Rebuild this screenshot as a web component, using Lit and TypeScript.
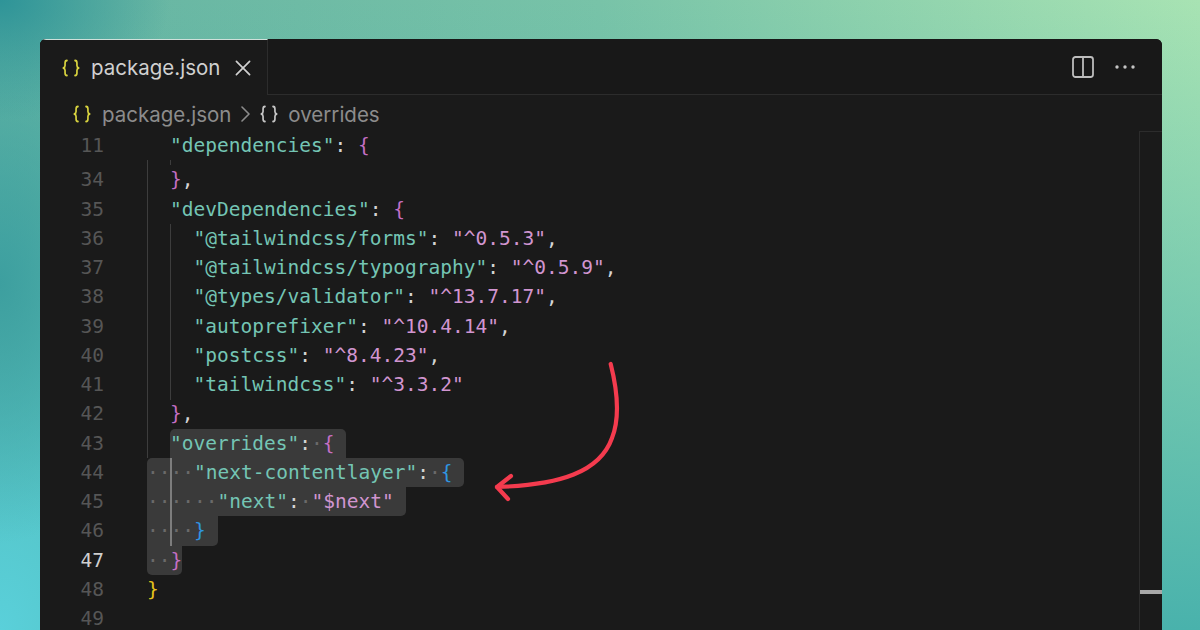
import { LitElement, html, css, nothing } from "lit";
import { customElement } from "lit/decorators.js";

type Seg = [string, string];
interface Row { n: number; segs: Seg[]; sel?: string; lead?: string; active?: boolean; }

const k = (t: string): Seg => ["key", t];
const v = (t: string): Seg => ["val", t];
const c = (t: string): Seg => ["pun", t];
const d = (t: string): Seg => ["dot", t];
const pink = (t: string): Seg => ["pink", t];
const blue = (t: string): Seg => ["blue", t];
const yel = (t: string): Seg => ["yel", t];

const entry = (n: number, key: string, val: string, comma = true): Row => ({
  n,
  lead: "    ",
  segs: [k(`"${key}"`), c(": "), v(`"${val}"`), ...(comma ? [c(",")] : [])],
});

const rows: Row[] = [
  { n: 34, lead: "  ", segs: [pink("}"), c(",")] },
  { n: 35, lead: "  ", segs: [k('"devDependencies"'), c(": "), pink("{")] },
  entry(36, "@tailwindcss/forms", "^0.5.3"),
  entry(37, "@tailwindcss/typography", "^0.5.9"),
  entry(38, "@types/validator", "^13.7.17"),
  entry(39, "autoprefixer", "^10.4.14"),
  entry(40, "postcss", "^8.4.23"),
  entry(41, "tailwindcss", "^3.3.2", false),
  { n: 42, lead: "  ", segs: [pink("}"), c(",")] },
  { n: 43, lead: "  ", sel: "s43", segs: [k('"overrides"'), c(":"), d("·"), pink("{")] },
  { n: 44, sel: "s44", segs: [d("····"), k('"next-contentlayer"'), c(":"), d("·"), blue("{")] },
  { n: 45, sel: "s45", segs: [d("······"), k('"next"'), c(":"), d("·"), v('"$next"')] },
  { n: 46, sel: "s46", segs: [d("····"), blue("}")] },
  { n: 47, sel: "s47", active: true, segs: [d("··"), pink("}")] },
  { n: 48, segs: [yel("}")] },
  { n: 49, segs: [] },
];

const braces = (cls: string) => html`<svg class="braces ${cls}" viewBox="0 0 20 18" preserveAspectRatio="none" fill="none" stroke="currentColor" stroke-width="1.9" stroke-linecap="round" stroke-linejoin="round">
  <path d="M5.5 1.5C3.6 1.5 3.4 2.6 3.4 4v2.6c0 1.2-.6 2-1.9 2.4 1.3.4 1.9 1.2 1.9 2.4V14c0 1.4.2 2.5 2.1 2.5"/>
  <path d="M14.5 1.5c1.9 0 2.1 1.1 2.1 2.5v2.6c0 1.2.6 2 1.9 2.4-1.3.4-1.9 1.2-1.9 2.4V14c0 1.4-.2 2.5-2.1 2.5"/>
</svg>`;

@customElement("app-root")
export class AppRoot extends LitElement {
  static styles = css`
    :host {
      display: block;
      position: relative;
      width: 1200px;
      height: 630px;
      overflow: hidden;
      padding: 39px 38px 0 40px;
      box-sizing: border-box;
      background:
        radial-gradient(170px 120px at 0% 0%, #2e9498 0%, rgba(46, 148, 152, 0) 100%),
        radial-gradient(150px 260px at 0% 45%, #3d9f9f 0%, rgba(61, 159, 159, 0) 100%),
        radial-gradient(300px 420px at 0% 100%, #5ad0da 0%, rgba(90, 208, 218, 0) 100%),
        linear-gradient(to bottom, rgba(73, 178, 172, 0) 0%, #49b2ac 100%),
        linear-gradient(to right, #64b3a2 0%, #78c3a8 50%, #a8e3b3 100%);
      font-family: "Inter", "Liberation Sans", sans-serif;
    }
    .win {
      height: 640px;
      background: #1a1a1a;
      border-radius: 6px 6px 0 0;
      overflow: hidden;
      display: flex;
      flex-direction: column;
    }
    .tabs {
      display: flex;
      height: 56px;
      flex: none;
      background: #181818;
    }
    .tab {
      width: 228px;
      box-sizing: border-box;
      border-top: 1px solid #cfe0da;
      border-right: 1px solid #2c2c2c;
      background: #1a1a1a;
      display: flex;
      align-items: center;
      padding: 0 0 0 22px;
      color: #d0d0d0;
      font-size: 20.5px;
      height: 56px;
    }
    .fill {
      flex: 1;
      border-bottom: 1px solid #2c2c2c;
      display: flex;
      align-items: center;
      justify-content: flex-end;
      gap: 21px;
      padding-right: 27px;
    }
    .braces { flex: none; width: 18px; height: 18px; }
    .yellow { color: #d7d23f; }
    .white { color: #c4c4c4; }
    .tab .braces { margin-right: 11px; }
    .tab-close { margin-left: 15px; flex: none; }
    .crumbs {
      height: 36px;
      flex: none;
      display: flex;
      align-items: center;
      padding-left: 33px;
      color: #8c8c8c;
      font-size: 20.5px;
      box-sizing: border-box;
      padding-top: 2px;
    }
    .crumbs .first { margin-right: 11px; }
    .crumbs .second { margin: 0 10px 0 0; }
    .chev { margin: 0 10px 0 10px; flex: none; }
    .body { flex: 1; display: flex; min-height: 0; }
    .editor {
      flex: 1;
      position: relative;
      font-family: "DejaVu Sans Mono", "Liberation Mono", monospace;
      font-size: 19.53px;
      line-height: 29.25px;
    }
    .row { display: flex; height: 29.25px; }
    .sticky { margin-bottom: 5px; }
    .num {
      width: 64px;
      flex: none;
      text-align: right;
      color: #565656;
    }
    .num.on { color: #cfcfcf; }
    .code { margin-left: 43px; white-space: pre; }
    .lead { margin-left: -0.5px; }
    .sel {
      display: inline-block;
      height: 29.25px;
      background: #3a3a3a;
    }
    .s43 { border-radius: 5px 5px 0 0; padding-right: 11.75px; }
    .s44 { border-radius: 5px 5px 5px 0; padding-right: 11.75px; }
    .s45 { border-radius: 0 0 5px 0; padding-right: 11.75px; }
    .s46 { border-radius: 0 0 5px 0; padding-right: 11.75px; }
    .s47 { border-radius: 0 0 5px 5px; }
    .key { color: #74c5b4; }
    .val { color: #d195d0; }
    .pun { color: #d4d4d4; }
    .dot { color: #6a6a6a; }
    .pink { color: #c56fc4; }
    .blue { color: #2f95e0; }
    .yel { color: #e8c51c; }
    .guide { position: absolute; width: 1px; background: #3d3d3d; }
    .g1 { left: 107px; top: 29px; height: 298px; }
    .g2 { left: 130px; top: 93px; height: 176px; }
    .g3 { left: 130px; top: 327px; height: 88px; width: 2px; background: #7d7d7d; }
    .g4 { left: 130px; top: 29px; height: 5px; }
    .scroll {
      width: 23px;
      flex: none;
      box-sizing: border-box;
      border-left: 1px solid #2c2c2c;
      border-top: 1px solid #2c2c2c;
      position: relative;
    }
    .thumb {
      position: absolute;
      left: 0;
      right: 0;
      top: 458px;
      height: 4px;
      background: #a8a8a8;
    }
    .arrow { position: absolute; left: 0; top: 0; pointer-events: none; }
  `;

  private line(r: Row) {
    const segs = r.segs.map(([cl, t]) => html`<span class=${cl}>${t}</span>`);
    return html`<div class="row">
      <span class="num ${r.active ? "on" : ""}">${r.n}</span>
      <span class="code">${r.lead ? html`<span class="lead">${r.lead}</span>` : nothing}${r.sel ? html`<span class="sel ${r.sel}">${segs}</span>` : segs}</span>
    </div>`;
  }

  render() {
    return html`
      <div class="win">
        <div class="tabs">
          <div class="tab">
            ${braces("yellow")}
            <span>package.json</span>
            <svg class="tab-close" width="16" height="16" viewBox="0 0 17 17" fill="none" stroke="#d0d0d0" stroke-width="1.8" stroke-linecap="round"><path d="M1.5 1.5l14 14M15.5 1.5l-14 14"/></svg>
          </div>
          <div class="fill">
            <svg width="22" height="22" viewBox="0 0 22 22" fill="none" stroke="#bdbdbd" stroke-width="1.8"><rect x="1" y="1" width="20" height="20" rx="2.5"/><path d="M11 1v20"/></svg>
            <svg width="20" height="4" viewBox="0 0 20 4" fill="#c4c4c4"><circle cx="2" cy="2" r="1.7"/><circle cx="10" cy="2" r="1.7"/><circle cx="18" cy="2" r="1.7"/></svg>
          </div>
        </div>
        <div class="crumbs">
          ${braces("yellow first")}
          <span>package.json</span>
          <svg class="chev" width="9" height="16" viewBox="0 0 9 16" fill="none" stroke="#8c8c8c" stroke-width="1.6" stroke-linecap="round" stroke-linejoin="round"><path d="M1 1l7 7-7 7"/></svg>
          ${braces("white second")}
          <span>overrides</span>
        </div>
        <div class="body">
          <div class="editor">
            <div class="row sticky">
              <span class="num">11</span>
              <span class="code"><span class="lead">  </span><span class="key">"dependencies"</span><span class="pun">: </span><span class="pink">{</span></span>
            </div>
            ${rows.map((r) => this.line(r))}
            <div class="guide g1"></div>
            <div class="guide g2"></div>
            <div class="guide g3"></div>
            <div class="guide g4"></div>
          </div>
          <div class="scroll"><div class="thumb"></div></div>
        </div>
      </div>
      <svg class="arrow" width="1200" height="630" fill="none" stroke="#f43b4e" stroke-width="4.2" stroke-linecap="round" stroke-linejoin="round">
        <path d="M610.7 364C616 385 621 415 612 438C600 472 560 485 497 487"/>
        <path d="M511 476L497 487L508 499"/>
      </svg>
    `;
  }
}
